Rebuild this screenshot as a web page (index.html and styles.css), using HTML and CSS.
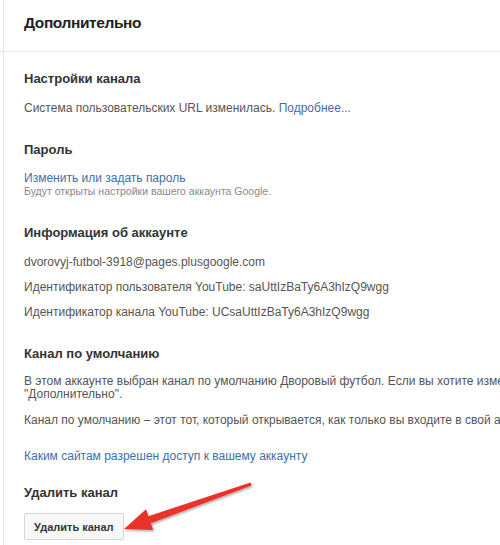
FILE: index.html
```html
<!DOCTYPE html>
<html lang="ru">
<head>
    <meta charset="UTF-8">
    <title>Дополнительно</title>
    <link rel="stylesheet" href="styles.css">
</head>
<body>
    <div class="page">
        <!-- заголовок -->
        <div class="page-head">
            <h1>Дополнительно</h1>
        </div>

        <div class="page-body">
            <div class="section">
                <h2>Настройки канала</h2>
                <p class="row">Система пользовательских URL изменилась. <a href="#">Подробнее...</a></p>
            </div>

            <div class="section pass">
                <h2>Пароль</h2>
                <a class="link-line" href="#">Изменить или задать пароль</a>
                <p class="hint">Будут открыты настройки вашего аккаунта Google.</p>
            </div>

            <div class="section">
                <h2>Информация об аккаунте</h2>
                <p class="row">dvorovyj-futbol-3918@pages.plusgoogle.com</p>
                <p class="row">Идентификатор пользователя YouTube: saUttIzBaTy6A3hIzQ9wgg</p>
                <p class="row">Идентификатор канала YouTube: UCsaUttIzBaTy6A3hIzQ9wgg</p>
            </div>

            <div class="section default">
                <h2>Канал по умолчанию</h2>
                <p class="row tight">В этом аккаунте выбран канал по умолчанию Дворовый футбол. Если вы хотите изменить его, перейдите в раздел<br>"Дополнительно".</p>
                <p class="row">Канал по умолчанию – этот тот, который открывается, как только вы входите в свой аккаунт.</p>
            </div>

            <div class="section sites">
                <a class="link-line" href="#">Каким сайтам разрешен доступ к вашему аккаунту</a>
            </div>

            <div class="section">
                <h2>Удалить канал</h2>
                <button class="btn">Удалить канал</button>
            </div>
        </div>

        <!-- красная стрелка поверх кнопки -->
        <svg class="arrow" width="150" height="70" viewBox="0 0 150 70">
            <defs>
                <filter id="sh" x="-20%" y="-30%" width="140%" height="160%">
                    <feDropShadow dx="1" dy="1.5" stdDeviation="1.3" flood-color="#000" flood-opacity="0.35"/>
                </filter>
            </defs>
            <g filter="url(#sh)" fill="#e8322b">
                <path d="M34.9 45.2 L32.3 38.2 L134.5 4.6 L135.5 7.4 Z"/>
                <path d="M8 51 L30 31.3 L37.2 52.1 Z"/>
            </g>
        </svg>
    </div>
</body>
</html>
```

FILE: styles.css
```css
* {
    margin: 0;
    padding: 0;
    box-sizing: border-box;
}
body {
    font-family: Arial, "Liberation Sans", sans-serif;
    background-color: #fff;
    color: #555;
    overflow: hidden;
    width: 500px;
    height: 545px;
}
.page {
    position: relative;
    height: 545px;
    border-left: 1px solid #e8e8e8;
    margin-left: 3px;
    width: 800px;
}
.page-head {
    height: 52px;
    padding: 14px 0 0 24px;
    border-bottom: 1px solid #e6e6e6;
    margin-left: -4px;
}
.page-head h1 {
    font-size: 15.5px;
    letter-spacing: -0.4px;
    font-weight: bold;
    color: #222;
}
.page-body {
    padding: 19px 0 0 20px;
}
.section {
    margin-bottom: 26px;
}
.section.pass {
    margin-bottom: 28px;
}
.section.default {
    margin-bottom: 21px;
}
.section.sites {
    margin-bottom: 22px;
}
.section h2 {
    font-size: 13px;
    font-weight: bold;
    color: #333;
    margin-bottom: 14px;
}
.row {
    font-size: 12px;
    line-height: 16px;
    white-space: nowrap;
    margin-bottom: 9px;
}
.row.tight {
    line-height: 13px;
    margin-top: 4px;
    margin-bottom: 11px;
}
.section .row:last-child {
    margin-bottom: 0;
}
a {
    color: #3d6fa8;
    text-decoration: none;
}
.link-line {
    display: block;
    font-size: 12px;
    line-height: 14px;
}
.hint {
    font-size: 10.5px;
    color: #888;
    line-height: 12px;
}
.btn {
    font-family: Arial, "Liberation Sans", sans-serif;
    font-size: 11px;
    font-weight: bold;
    color: #333;
    background-color: #f8f8f8;
    border: 1px solid #d6d6d6;
    border-radius: 2px;
    height: 27px;
    padding: 0 9px;
    margin-top: -1px;
}
.arrow {
    position: absolute;
    left: 112px;
    top: 478px;
}
```
